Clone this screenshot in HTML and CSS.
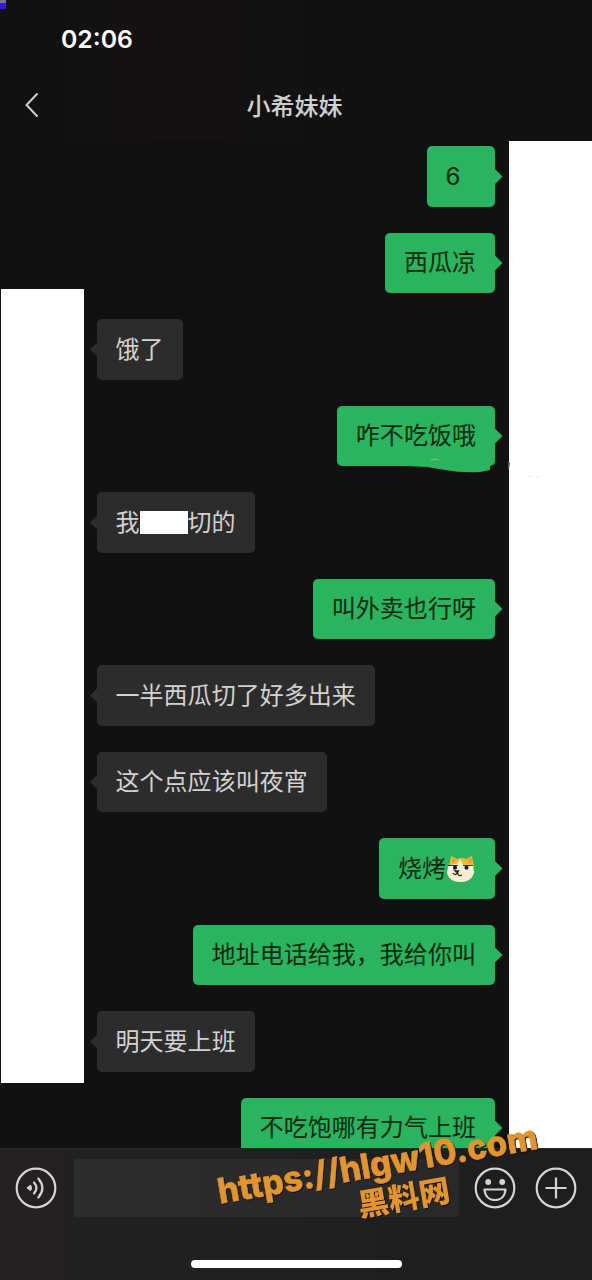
FILE: index.html
```html
<!DOCTYPE html>
<html lang="zh-CN">
<head>
<meta charset="utf-8">
<title>小希妹妹</title>
<link rel="stylesheet" href="styles.css">
</head>
<body>
<div class="phone">
  <header class="header">
    <div class="corner"></div>
    <div class="status"><span class="clock">02:06</span></div>
    <nav class="nav">
      <svg class="back" width="16" height="28" viewBox="0 0 16 28"><path d="M13 3 2.500 14 13 25" fill="none" stroke="#cfcfcf" stroke-width="2" stroke-linecap="round"/></svg>
      <h1 class="title">小希妹妹</h1>
    </nav>
  </header>
  <main class="chat">
    <div class="mask mask-left"></div>
    <div class="messages">
      <div class="bubble out digit">6</div>
      <div class="bubble out">西瓜凉</div>
      <div class="bubble in">饿了</div>
      <div class="bubble out">咋不吃饭哦
        <svg class="smear" width="108" height="24" viewBox="0 0 108 24"><path d="M0 13H10L32 14 50 17Q66 20 85 19L95 17V12L99 10V0H80V13Z" fill="#2bb460"/><path d="M36 7q4-2 8 0" fill="none" stroke="#85c794"/></svg>
      </div>
      <div class="bubble in">我<span class="redacted"></span>切的</div>
      <div class="bubble out">叫外卖也行呀</div>
      <div class="bubble in">一半西瓜切了好多出来</div>
      <div class="bubble in">这个点应该叫夜宵</div>
      <div class="bubble out">烧烤<svg class="doge" width="30" height="28" viewBox="0 0 30 28">
        <path d="M3 12 5 1 11 4Q16 2 20 4L26 1 28 12 27 20Q24 27 15 27 3 27 2 18Z" fill="#f5b935"/>
        <path d="M6 3 10 5 6 8ZM25 3 21 5 26 8Z" fill="#e59b35"/>
        <path d="M2 12Q8 8 11 9L14 4 17 10Q23 11 28 15V18Q25 27 15 27 3 27 1 18Z" fill="#f6edd4"/>
        <path d="M2 10.500H12V15H2ZM17 10.500H27V15H17Z" fill="#fff"/>
        <path d="M2 10.500H12M17 10.500H27" stroke="#4c361c" stroke-width="1.200"/>
        <circle cx="9" cy="12.700" r="2.100" fill="#201810"/><circle cx="20.500" cy="12.700" r="2.100" fill="#201810"/>
        <path d="M9 16H12.500L11.500 18ZM7 18Q9 21 11.500 18 13 22 16 20" fill="none" stroke="#30251c" stroke-width="1.300"/>
      </svg></div>
      <div class="bubble out">地址电话给我，我给你叫</div>
      <div class="bubble in">明天要上班</div>
      <div class="bubble out">不吃饱哪有力气上班</div>
    </div>
    <div class="mask mask-right"><svg class="specks" width="40" height="22" viewBox="0 0 40 22"><path d="M0 0 2 2 1 8 0 8Z" fill="#555"/><path d="M20 15.500h3M28 16h3M33 15h1" stroke="#e6e6e6"/></svg></div>
  </main>
  <footer class="footer">
    <div class="toolbar">
      <svg class="icon" width="42" height="42" viewBox="0 0 42 42" fill="none" stroke="#d4d4d4" stroke-width="2.200">
        <circle cx="21" cy="21" r="19.300"/>
        <path d="M12.500 20.800 15.500 18.500Q17 20.700 15.500 23.200Z" fill="#d4d4d4" stroke="#d4d4d4" stroke-width="1.500" stroke-linejoin="round"/>
        <path d="M19 15.500Q23.800 21 19 26.500M23.300 11.500Q31.500 21 23.300 30.500" stroke-linecap="round"/>
      </svg>
      <div class="input"></div>
      <svg class="icon smile" width="42" height="42" viewBox="0 0 42 42" fill="none" stroke="#d4d4d4" stroke-width="2.200">
        <circle cx="21" cy="21" r="19.300"/>
        <circle cx="14.200" cy="15" r="2.900" fill="#d4d4d4" stroke="none"/><circle cx="28.200" cy="15" r="2.900" fill="#d4d4d4" stroke="none"/>
        <path d="M10.500 22.500H31.500C31 29 27 33 21 33S11 29 10.500 22.500Z" stroke-linejoin="round"/>
      </svg>
      <svg class="icon" width="42" height="42" viewBox="0 0 42 42" fill="none" stroke="#d4d4d4" stroke-width="2.200">
        <circle cx="21" cy="21" r="19.300"/><path d="M21 10.500V31.500M10.500 21H31.500"/>
      </svg>
    </div>
    <div class="home"></div>
  </footer>
  <svg class="watermark" width="352" height="120" viewBox="210 1110 352 120">
    <g transform="rotate(-9.800 222 1204)">
      <text class="url" x="220" y="1203.500" textLength="324" lengthAdjust="spacingAndGlyphs">https://hlgw10.com</text>
    </g>
    <g transform="rotate(-9.800 361 1217)">
      <text class="site" x="360" y="1216.500" textLength="93">黑料网</text>
    </g>
  </svg>
</div>
</body>
</html>
```
FILE: styles.css
```css
* { box-sizing: border-box; }
body { margin: 0; background: #111; }
.phone {
  position: relative;
  width: 592px;
  height: 1280px;
  overflow: hidden;
  display: flex;
  flex-direction: column;
  background: #111;
  font-family: "Liberation Sans", "Noto Sans CJK SC", sans-serif;
}
.header {
  position: relative;
  height: 141px;
  flex: none;
  background: linear-gradient(90deg, #111 0, #121111 70px, #171211 170px, #161211 200px, #111 300px);
}
.corner {
  position: absolute;
  left: 0;
  top: 0;
  width: 6px;
  height: 9px;
  background: linear-gradient(#77758a 0 3px, #4310dd 3px);
}
.status { height: 79px; padding: 24px 0 0 61px; }
.clock {
  display: block;
  font: 600 24.8px/31px Inter, sans-serif;
  color: #fff;
}
.nav {
  height: 52px;
  display: grid;
  grid-template-columns: 100px 1fr 100px;
  align-items: center;
}
.back { margin-left: 24px; }
.title {
  margin: -1px 0 0 -3px;
  font: 500 24px/36px "Noto Sans CJK SC", sans-serif;
  color: #cfcfcf;
  text-align: center;
}
.chat {
  height: 1007px;
  flex: none;
  display: grid;
  grid-template-columns: 84px 425px 83px;
  grid-template-rows: 1007px;
  overflow: hidden;
}
.mask { background: #fff; }
.mask-left { margin: 148px 0 65px 1px; }
.mask-right { position: relative; }
.specks { position: absolute; left: -1px; top: 320px; }
.messages {
  display: flex;
  flex-direction: column;
  gap: 26px;
  padding: 5px 14px 0 13px;
}
.bubble {
  position: relative;
  flex: none;
  height: 60.5px;
  padding: 1px 19px 0 18.5px;
  border-radius: 5px;
  display: flex;
  align-items: center;
  font-size: 24px;
  line-height: 36px;
  letter-spacing: .04px;
  white-space: nowrap;
}
.bubble::after {
  content: "";
  position: absolute;
  top: 22.5px;
  width: 8px;
  height: 16px;
}
.in { align-self: flex-start; background: #2c2c2c; color: #d2d2d2; }
.in::after { left: -7px; background: #2c2c2c; clip-path: polygon(100% 0, 0 50%, 100% 100%); }
.out { align-self: flex-end; background: #2bb460; color: #06290f; }
.out::after { right: -7.5px; background: #2bb460; clip-path: polygon(0 0, 100% 50%, 0 100%); }
.digit { width: 68px; font-family: Inter, sans-serif; }
.redacted { width: 48px; height: 23px; background: #fff; }
.doge { margin-left: 0; }
.smear { position: absolute; left: 58px; top: 47px; }
.footer {
  height: 132px;
  flex: none;
  background: linear-gradient(90deg, #242120, #202020 45%, #1d1d1d);
  border-top: 1px solid #292928;
}
.toolbar {
  height: 78px;
  padding: 0 15px;
  display: flex;
  align-items: center;
}
.icon { flex: none; }
.input {
  width: 385px;
  height: 58px;
  margin: 0 15px 0 17px;
  border-radius: 3px;
  background: linear-gradient(90deg, #2c2c2c, #292929);
}
.smile { margin-right: 19px; }
.home {
  width: 211px;
  height: 8px;
  margin: 33px auto 0;
  border-radius: 4px;
  background: #fff;
}
.watermark {
  position: absolute;
  left: 210px;
  top: 1110px;
  fill: #e2952e;
  filter: drop-shadow(1.5px 1.5px .5px #17100a);
}
.url { font: 800 35px Inter, sans-serif; stroke: #e2952e; stroke-width: .5px; }
.site { font: 900 31px "Noto Sans CJK SC", sans-serif; }
```
